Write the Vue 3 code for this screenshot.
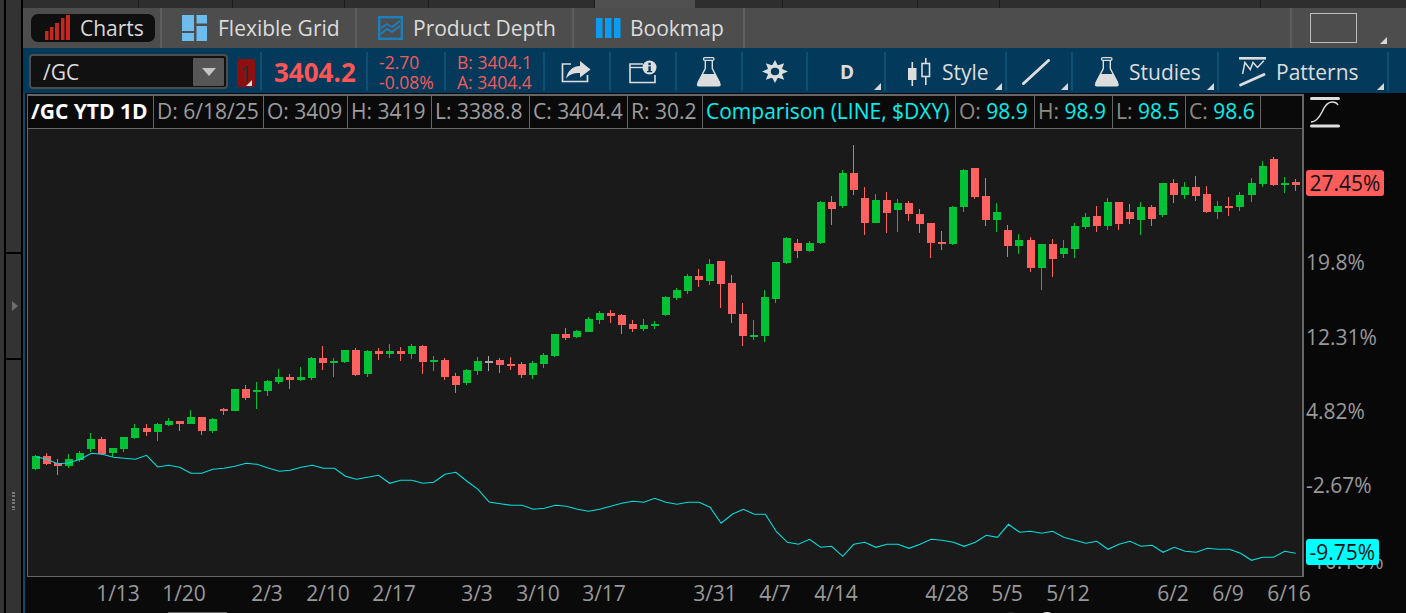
<script setup>
const G = 'g', R = 'r', N = 'n'
const groups = [
  { base: 340, rows: [
    [346,348,387,390,G],[339,348,372,375,R],[357,370,378,405,R],[342,357,378,384,G],[333,339,360,366,G],
    [279,297,327,336,G],[291,297,342,345,R],[324,324,339,351,G],[291,291,327,336,G],[252,264,294,297,G],
    [252,264,276,288,R],[249,252,276,303,G],[235,243,255,258,G],[243,243,252,273,R],[210,231,252,252,G],
    [231,231,273,285,R],[234,237,273,279,G],[204,207,213,225,R],[147,147,213,213,G],[135,147,174,180,R],
    [126,150,156,207,G],[120,123,153,168,G],[87,111,126,132,G],[102,111,120,147,R],[81,111,120,123,G],
    [51,54,114,120,G],[18,54,69,90,R],[54,63,69,111,G],[30,30,66,69,G],[24,30,105,108,R],
    [30,33,102,111,G],[24,33,42,60,R],[12,33,42,54,G],[21,33,42,63,R],[12,18,42,57,G],
    [15,18,66,102,R],[48,60,66,93,G],[54,60,111,120,R],[99,108,135,159,R],[87,90,129,135,G]
  ]},
  { base: 240, rows: [
    [351,363,393,405,G],[348,363,366,393,N],[354,360,375,399,R],[351,372,378,390,R],[366,372,405,414,R],
    [363,369,405,417,G],[339,345,372,384,G],[282,282,348,351,G],[264,282,294,300,R],[270,273,291,294,G],
    [231,237,276,276,G],[213,219,240,252,G],[210,219,228,249,R],[222,225,255,282,R],[240,252,267,276,R],
    [237,255,267,273,G],[243,252,258,267,G],[168,171,225,228,G],[144,150,174,180,G],[102,108,153,162,G],
    [87,108,120,141,R],[57,72,123,135,G],[63,63,132,204,R],[105,129,222,249,R],[189,222,288,318,R],
    [240,285,291,300,G],[150,171,288,306,G],[66,66,177,189,G],[-9,-6,69,72,G],[-3,9,33,54,R],[3,9,33,36,G]
  ]},
  { base: 130, rows: [
    [213,216,339,342,G],[198,216,237,285,R],[120,129,228,234,G],[45,129,180,195,R],[171,204,279,315,R],
    [192,210,279,279,G],[186,210,249,309,R],[207,219,240,306,G],[213,219,252,273,R],[237,252,282,309,R],
    [279,279,339,384,R],[303,336,342,360,R],[228,231,342,345,G],[117,120,231,246,G],[114,114,201,207,R],
    [144,198,270,288,R],[219,246,270,306,G],[285,300,348,381,R],[312,330,348,372,G],[321,330,414,426,R],
    [342,342,414,480,G],[327,342,387,441,R],[330,354,372,384,G],[279,288,357,384,G],[249,261,291,297,G],
    [228,258,288,306,R],[204,216,288,300,G],[216,216,282,300,R],[222,246,267,282,R],[216,231,270,315,G],
    [225,231,267,288,R],[159,159,255,261,G],[147,159,195,219,R],[156,171,195,207,G],[138,171,198,213,R],
    [168,192,246,249,R],[213,228,246,267,G],[201,228,234,258,R],[186,195,231,243,G],[144,159,195,216,G],
    [93,108,162,171,G],[81,87,165,168,R],[141,159,165,189,G],[147,156,165,183,R]
  ]}
]
const colors = { g: '#00c234', r: '#ff6060', n: '#a8a8a8' }
const slot = (i) => Math.round(36 + i * 11.05)
const candles = groups
  .flatMap((g) => g.rows.map((r) => ({ base: g.base, r })))
  .map(({ base, r }, i) => {
    const y = (z) => Math.round(base + z / 3)
    const top = y(r[1])
    return {
      wickX: slot(i) - 1, bodyX: slot(i) - 4,
      wickTop: y(r[0]), wickH: Math.max(y(r[3]) - y(r[0]), 1),
      bodyTop: top, bodyH: Math.max(y(r[2]) - top, 2),
      fill: colors[r[4]]
    }
  })

const lineA = [350,358,372,368,358,340,343,352,355,358,346,381,376,382,400,400,388,385,379,370,373,384,394,391,382,376,385,385,409,418,412,406,430,421,421,430,427,403,397,424,448]
const lineB = [71,76,76,88,85,76,79,88,94,88,79,70,64,67,55,67,73,67,67,82,130,103,88,103,103,155,187,193,178,202,199,229,193,187,202,193,193,205,193,178,181,187,199,187,166,172,133]
const lineC = [97,94,100,94,112,121,130,124,148,133,124,139,136,157,142,154,157,145,148,148,160,181,172,172,154,160]
const lineY = [
  ...lineA.map((z) => 340 + z / 3),
  502,
  ...lineB.map((z) => 480 + z / 3),
  ...lineC.map((z) => 500 + z / 3)
]
const linePoints = lineY.map((y, i) => `${(36 + i * 11.05).toFixed(1)},${y.toFixed(1)}`).join(' ')

const legend = [
  { key: 'sym', cells: [{ t: '/GC YTD 1D', c: 'bold' }] },
  { key: 'd', cells: [{ t: 'D: 6/18/25', c: 'lab' }] },
  { key: 'o', cells: [{ t: 'O: 3409', c: 'lab' }] },
  { key: 'h', cells: [{ t: 'H: 3419', c: 'lab' }] },
  { key: 'l', cells: [{ t: 'L: 3388.8', c: 'lab' }] },
  { key: 'c', cells: [{ t: 'C: 3404.4', c: 'lab' }] },
  { key: 'r', cells: [{ t: 'R: 30.2', c: 'lab' }] },
  { key: 'cmp', cells: [{ t: 'Comparison (LINE, $DXY)', c: 'cy' }] },
  { key: 'o2', cells: [{ t: 'O: ', c: 'dim' }, { t: '98.9', c: 'cy' }] },
  { key: 'h2', cells: [{ t: 'H: ', c: 'dim' }, { t: '98.9', c: 'cy' }] },
  { key: 'l2', cells: [{ t: 'L: ', c: 'dim' }, { t: '98.5', c: 'cy' }] },
  { key: 'c2', cells: [{ t: 'C: ', c: 'dim' }, { t: '98.6', c: 'cy' }] },
  { key: 'end', cells: [] }
]

const yLabels = [
  { t: '19.8%', y: 262 }, { t: '12.31%', y: 337 }, { t: '4.82%', y: 411 },
  { t: '-2.67%', y: 485 }, { t: '-10.16%', y: 561 }
]
const xLabels = [
  ['1/13', 118], ['1/20', 184], ['2/3', 267], ['2/10', 328], ['2/17', 394], ['3/3', 477],
  ['3/10', 538], ['3/17', 604], ['3/31', 715], ['4/7', 775], ['4/14', 836], ['4/28', 947],
  ['5/5', 1007], ['5/12', 1068], ['6/2', 1173], ['6/9', 1228], ['6/16', 1289]
]
const chartBars = [[0, 9, 3.5], [5, 13, 3.5], [10, 17, 4], [16, 22, 3.5], [21, 25, 4]]
const rays = [0, 45, 90, 135, 180, 225, 270, 315]
</script>

<template>
  <div class="app">
    <aside class="rail">
      <div class="rail-outer"></div>
      <div class="rail-inner">
        <div class="rail-seg seg-a"></div>
        <div class="rail-seg seg-b"><span class="rail-arrow"></span></div>
        <div class="rail-seg seg-c"><span class="rail-dots"></span></div>
      </div>
    </aside>

    <div class="main">
      <div class="strip">
        <i class="st w116"></i><i class="st w94"></i><i class="st w112"></i><i class="st w84"></i>
        <i class="st w166"></i><i class="st hi"></i><i class="st w88"></i><i class="st w135"></i><i class="st w82"></i>
        <i class="st w261"></i>
      </div>

      <nav class="tabs">
        <div class="tab tab-charts">
          <div class="pill">
            <svg class="ic-charts" width="26" height="26" viewBox="0 0 26 26">
              <rect v-for="b in chartBars" :key="b[0]" :x="b[0]" :y="25 - b[1]" :width="b[2]" :height="b[1]" fill="#c6281f" />
            </svg>
            <span>Charts</span>
          </div>
        </div>
        <div class="tab tab-grid">
          <svg width="26" height="26" viewBox="0 0 26 26">
            <rect x="0" y="0" width="12" height="16" fill="#6cbcee" />
            <rect x="0" y="18" width="12" height="8" fill="#6cbcee" />
            <rect x="14.5" y="0" width="10.5" height="8.5" fill="#6cbcee" />
            <rect x="14.5" y="11" width="10.5" height="15" fill="#6cbcee" />
          </svg>
          <span>Flexible Grid</span>
        </div>
        <div class="tab tab-depth">
          <svg width="25" height="24" viewBox="0 0 25 24">
            <rect x="1.2" y="1.2" width="22.6" height="21.6" fill="none" stroke="#1a7fbd" stroke-width="2.4" />
            <path d="M3 12 L9 8 L14 11 L22 5" fill="none" stroke="#1a7fbd" stroke-width="1.9" />
            <path d="M3 18 L9 13 L14 16 L22 10" fill="none" stroke="#1a7fbd" stroke-width="1.9" />
          </svg>
          <span>Product Depth</span>
        </div>
        <div class="tab tab-book">
          <svg width="25" height="20" viewBox="0 0 25 20">
            <rect x="0" y="0" width="6.5" height="20" fill="#0a9cf0" />
            <rect x="9" y="0" width="6.5" height="20" fill="#0a9cf0" />
            <rect x="18" y="0" width="6.5" height="20" fill="#0a9cf0" />
          </svg>
          <span>Bookmap</span>
        </div>
        <div class="tab tab-gap"></div>
        <div class="tab tab-box"><div class="box"></div><b class="corner"></b></div>
      </nav>

      <div class="toolbar">
        <div class="seg s-sym">
          <div class="combo">
            <span>/GC</span>
            <div class="drop"><b></b></div>
          </div>
          <div class="badge">1<b class="corner small"></b></div>
        </div>
        <div class="seg s-price"><span class="price">3404.2</span></div>
        <div class="seg s-chg"><span>-2.70</span><span>-0.08%</span></div>
        <div class="seg s-ba"><span>B: 3404.1</span><span>A: 3404.4</span></div>
        <div class="seg s-ico s-share">
          <svg width="30" height="24" viewBox="0 0 30 24">
            <path d="M10 4 H1.5 V21.5 H26.5 V15" fill="none" stroke="#ddd" stroke-width="1.7" />
            <path d="M19 1 L29.5 9.5 L19 17.5 V13 C13 13 8 14 5 19 C6 12 11 6 19 6 Z" fill="#ddd" />
          </svg>
        </div>
        <div class="seg s-ico s-info">
          <svg width="28" height="24" viewBox="0 0 28 24">
            <path d="M14 4 H1 V22.5 H26 V15" fill="none" stroke="#ddd" stroke-width="1.6" />
            <path d="M1 7.5 H14" fill="none" stroke="#ddd" stroke-width="1.4" />
            <circle cx="20.5" cy="7.5" r="7" fill="#ddd" />
            <rect x="19.4" y="2.8" width="2.4" height="2.4" fill="#033a5c" />
            <rect x="19.4" y="6.3" width="2.4" height="5.2" fill="#033a5c" />
            <rect x="18" y="11" width="5.2" height="1.2" fill="#033a5c" />
          </svg>
        </div>
        <div class="seg s-ico s-flask">
          <svg width="26" height="30" viewBox="0 0 26 30">
            <rect x="7.5" y="0.7" width="10.5" height="2.6" rx="1.3" fill="none" stroke="#ddd" stroke-width="1.3" />
            <path d="M9.3 3.5 V11.5 L1.8 26" fill="none" stroke="#ddd" stroke-width="1.4" />
            <path d="M16.3 3.5 V11.5 L23.8 26" fill="none" stroke="#ddd" stroke-width="1.4" />
            <path d="M6.5 17 H19 L24.7 27 Q25 29.5 22.5 29.5 H3 Q0.5 29.5 0.9 27 Z" fill="#ddd" />
          </svg>
        </div>
        <div class="seg s-ico s-gear">
          <svg width="26" height="23" viewBox="-12 -12 24 24" preserveAspectRatio="none">
            <path v-for="r in rays" :key="r" d="M-2.8 -6 L0 -12 L2.8 -6 Z" :transform="`rotate(${r})`" fill="#ddd" />
            <circle r="7.2" fill="#ddd" />
            <circle r="3.9" fill="#033a5c" />
          </svg>
        </div>
        <div class="seg s-d"><span>D</span><b class="corner"></b></div>
        <div class="seg s-style">
          <svg width="23" height="28" viewBox="0 0 23 28">
            <rect x="3.5" y="4" width="1.6" height="24" fill="#ddd" />
            <rect x="0" y="10" width="8.5" height="12" fill="#ddd" />
            <rect x="17" y="0" width="1.6" height="27" fill="#ddd" />
            <rect x="14" y="5.5" width="7.5" height="13" fill="#033a5c" stroke="#ddd" stroke-width="1.6" />
          </svg>
          <span>Style</span>
          <b class="corner"></b>
        </div>
        <div class="seg s-ico s-line">
          <svg width="28" height="26" viewBox="0 0 28 26">
            <path d="M1.5 24.5 L26.5 1.5" stroke="#ddd" stroke-width="3" stroke-linecap="round" />
          </svg>
          <b class="corner"></b>
        </div>
        <div class="seg s-studies">
          <svg width="26" height="30" viewBox="0 0 26 30">
            <rect x="7.5" y="0.7" width="10.5" height="2.6" rx="1.3" fill="none" stroke="#ddd" stroke-width="1.3" />
            <path d="M9.3 3.5 V11.5 L1.8 26" fill="none" stroke="#ddd" stroke-width="1.4" />
            <path d="M16.3 3.5 V11.5 L23.8 26" fill="none" stroke="#ddd" stroke-width="1.4" />
            <path d="M6.5 17 H19 L24.7 27 Q25 29.5 22.5 29.5 H3 Q0.5 29.5 0.9 27 Z" fill="#ddd" />
          </svg>
          <span>Studies</span>
          <b class="corner"></b>
        </div>
        <div class="seg s-patterns">
          <svg width="27" height="30" viewBox="0 0 27 30">
            <rect x="0" y="0" width="27" height="2.6" fill="#ddd" />
            <path d="M3.6 17 L5.9 5.5 L11.3 12.5 L14 5.5 L18.5 10.5 L24.8 3.7" fill="none" stroke="#ddd" stroke-width="1.5" />
            <path d="M1.5 28 L25 17.5" stroke="#ddd" stroke-width="2.8" stroke-linecap="round" />
          </svg>
          <span>Patterns</span>
          <b class="corner"></b>
        </div>
        <div class="seg s-rest"></div>
      </div>

      <div class="workspace">
        <div class="chart-col">
          <div class="legend">
            <div v-for="cell in legend" :key="cell.key" class="cell">
              <span v-for="(p, i) in cell.cells" :key="i" :class="p.c">{{ p.t }}</span>
            </div>
          </div>
          <div class="plot">
            <svg class="plot-svg" width="1275" height="447" viewBox="28 129 1275 447" shape-rendering="crispEdges">
              <g v-for="(c, i) in candles" :key="i" :fill="c.fill">
                <rect :x="c.wickX" :y="c.wickTop" width="1" :height="c.wickH" />
                <rect :x="c.bodyX" :y="c.bodyTop" width="8" :height="c.bodyH" />
              </g>
              <polyline :points="linePoints" fill="none" stroke="#00dede" stroke-width="1.1" shape-rendering="auto" />
            </svg>
          </div>
          <div class="xaxis">
            <span v-for="l in xLabels" :key="l[0]" class="xlab" :style="{ left: l[1] - 27 + 'px' }">{{ l[0] }}</span>
            <i class="scroll-thumb"></i>
            <i class="dot-a"></i>
            <i class="dot-b"></i>
          </div>
        </div>
        <div class="axis-col">
          <svg class="curve" width="30" height="31" viewBox="0 0 30 31">
            <rect x="0" y="0" width="30" height="3" rx="1.5" fill="#ddd" />
            <rect x="0" y="27.5" width="30" height="3" rx="1.5" fill="#ddd" />
            <path d="M1 25 C6 25 9 21 12 15 C15 8 18 5 22 5 C25 5 27 6 28 8" fill="none" stroke="#ddd" stroke-width="1.5" />
          </svg>
          <span v-for="l in yLabels" :key="l.t" class="ylab" :style="{ top: l.y - 93 + 'px' }">{{ l.t }}</span>
          <span class="tag tag-red">27.45%</span>
          <span class="tag tag-cyan">-9.75%</span>
        </div>
      </div>
    </div>
  </div>
</template>

<style>
html, body { margin: 0; background: #0a0a0a; }
</style>

<style scoped>
.app {
  display: flex;
  width: 1406px;
  height: 613px;
  overflow: hidden;
  background: #0a0a0a;
  font-family: "Open Sans", "Noto Sans", sans-serif;
  color: #ddd;
}
.rail { width: 23px; flex: none; display: flex; background: #000; }
.rail-outer { width: 4px; background: #343434; margin-right: 2px; }
.rail-inner { width: 15px; display: flex; flex-direction: column; gap: 2px; }
.rail-seg { background: #333; display: flex; align-items: center; justify-content: center; position: relative; }
.seg-a { height: 252px; }
.seg-b { height: 104px; }
.seg-c { flex: 1; }
.rail-arrow { width: 0; height: 0; border-left: 6px solid #6e6e6e; border-top: 5.5px solid transparent; border-bottom: 5.5px solid transparent; margin-left: 2px; }
.rail-dots { position: absolute; top: 132px; left: 6px; width: 3px; height: 18px; background: repeating-linear-gradient(#777 0 2px, transparent 2px 3.4px); }

.main { flex: 1; min-width: 0; display: flex; flex-direction: column; }

.strip { height: 8px; display: flex; background: #2e2e2e; flex: none; }
.st { display: block; border-right: 1px solid #1c1c1c; box-sizing: border-box; height: 8px; }
.w116 { width: 116px; } .w94 { width: 94px; } .w112 { width: 112px; } .w84 { width: 84px; }
.w166 { width: 166px; } .hi { width: 100px; background: #505050; border-right: 0; } .w88 { width: 88px; }
.w135 { width: 135px; } .w82 { width: 82px; } .w261 { width: 261px; }

.tabs { height: 40px; flex: none; display: flex; background: #4d4d4d; }
.tab { display: flex; align-items: center; border-right: 2px solid #5e5e5e; box-sizing: border-box; font-size: 21px; color: #dcdcdc; position: relative; }
.tab-charts { width: 139px; padding-left: 8px; }
.tab-grid { width: 195px; padding-left: 20px; gap: 10px; }
.tab-depth { width: 217px; padding-left: 21px; gap: 10px; }
.tab-book { width: 171px; padding-left: 22px; gap: 9px; }
.tab-gap { width: 547px; }
.tab-box { flex: 1; border-right: 0; padding-left: 18px; }
.pill { width: 124px; height: 28px; background: #0f0f0f; border-radius: 7px; display: flex; align-items: center; box-sizing: border-box; padding-left: 14px; gap: 9px; color: #d8d8d8; }
.ic-charts { flex: none; }
.box { width: 47px; height: 30px; border: 1px solid #bdbdbd; box-sizing: border-box; }
.corner { position: absolute; right: 4px; bottom: 4px; width: 0; height: 0; border-left: 7px solid transparent; border-bottom: 7px solid #d8d8d8; }
.corner.small { right: 0; bottom: 0; border-left-width: 6px; border-bottom-width: 6px; }
.tab-box .corner { right: 19px; }

.toolbar { height: 45px; flex: none; display: flex; background: #033a5c; padding-top: 4px; padding-bottom: 2px; box-sizing: border-box; }
.seg { position: relative; display: flex; align-items: center; box-sizing: border-box; border-right: 2px solid #0e4f74; font-size: 21px; color: #ddd; flex: none; }
.s-sym { width: 239px; padding-left: 6px; gap: 9px; }
.combo { width: 199px; height: 35px; background: #111; border: 2px solid #4c4c4c; border-radius: 4px; box-sizing: border-box; display: flex; align-items: center; justify-content: space-between; padding: 0 2px 0 12px; color: #ddd; }
.drop { width: 31px; height: 28px; background: #565656; display: flex; align-items: center; justify-content: center; border-radius: 1px; }
.drop b { width: 0; height: 0; border-top: 8px solid #c4c4c4; border-left: 7px solid transparent; border-right: 7px solid transparent; }
.badge { position: relative; width: 18px; height: 28px; background: #8e0f0f; color: #2d2d2d; border-radius: 3px; display: flex; align-items: center; justify-content: center; font-size: 22px; margin-top: 2px; }
.s-price { width: 106px; padding-left: 12px; }
.price { color: #ff5555; font-weight: 700; font-size: 26px; }
.s-chg { width: 78px; padding-left: 11px; flex-direction: column; align-items: flex-start; justify-content: center; color: #f25a5a; font-size: 17.5px; line-height: 20px; }
.s-ba { width: 99px; padding-left: 11px; flex-direction: column; align-items: flex-start; justify-content: center; color: #f25a5a; font-size: 17.5px; line-height: 20px; }
.s-ico { justify-content: center; }
.s-share { width: 66px; padding-right: 2px; }
.s-info { width: 66px; }
.s-flask { width: 66px; padding-top: 1px; }
.s-gear { width: 65px; }
.s-d { width: 78px; padding-left: 32px; font-weight: 700; font-size: 19px; }
.s-style { width: 121px; padding-left: 22px; gap: 11px; }
.s-line { width: 66px; padding-right: 6px; }
.s-studies { width: 146px; padding-left: 21px; gap: 9px; }
.s-patterns { width: 170px; padding-left: 20px; gap: 10px; }
.s-rest { flex: 1; border-right: 0; }
.seg .corner { right: 3px; bottom: 1px; }

.workspace { flex: 1; min-height: 0; display: flex; border-left: 2px solid #0e4a70; background: #0a0a0a; }
.chart-col { position: relative; z-index: 1; width: 1279px; padding-left: 2px; box-sizing: border-box; display: flex; flex-direction: column; flex: none; }
.legend {
  margin-top: 1px; height: 35px; flex: none; box-sizing: border-box;
  display: grid;
  grid-template-columns: 126px 110px 84px 84px 98px 98px 75px 253px 79px 78px 73px 75px 1fr;
  border: 1px solid #666; border-width: 2px 2px 1px 1px;
  font-size: 21px;
}
.cell { display: flex; align-items: center; padding: 0 0 3px 3px; border-right: 1px solid #666; white-space: nowrap; color: #9c9c9c; }
.cell:last-child { border-right: 0; }
.bold { font-weight: 700; color: #fff; }
.lab { color: #9c9c9c; }
.dim { color: #8f8a80; white-space: pre; }
.cy { color: #00f0f0; }
.plot { height: 448px; flex: none; box-sizing: border-box; border: 1px solid #666; border-width: 0 2px 1px 1px; background: #1a1a1a; }
.plot-svg { display: block; }
.xaxis { flex: 1; position: relative; }
.xlab { position: absolute; top: 2px; transform: translateX(-50%); font-size: 21px; color: #999; white-space: nowrap; }
.scroll-thumb { position: absolute; left: 141px; bottom: 0; width: 59px; height: 1px; background: #666; }
.dot-a { position: absolute; left: 978px; bottom: -5px; width: 12px; height: 6px; border-radius: 50%; background: #2a2a2a; }
.dot-b { position: absolute; left: 1014px; bottom: -5px; width: 12px; height: 6px; border-radius: 50%; background: #ddd; }
.axis-col { flex: 1; position: relative; background: #080808; }
.curve { position: absolute; left: 6px; top: 4px; }
.ylab { position: absolute; left: 2px; transform: translateY(-50%); font-size: 21px; color: #999; white-space: nowrap; }
.tag { position: absolute; left: 2px; transform: translateY(-50%); font-size: 21px; line-height: 26px; color: #111; border-radius: 3px; padding: 0 3.5px; white-space: nowrap; }
.tag-red { top: 90px; background: #ff5c5c; }
.tag-cyan { top: 459px; background: #00ffff; }
</style>
